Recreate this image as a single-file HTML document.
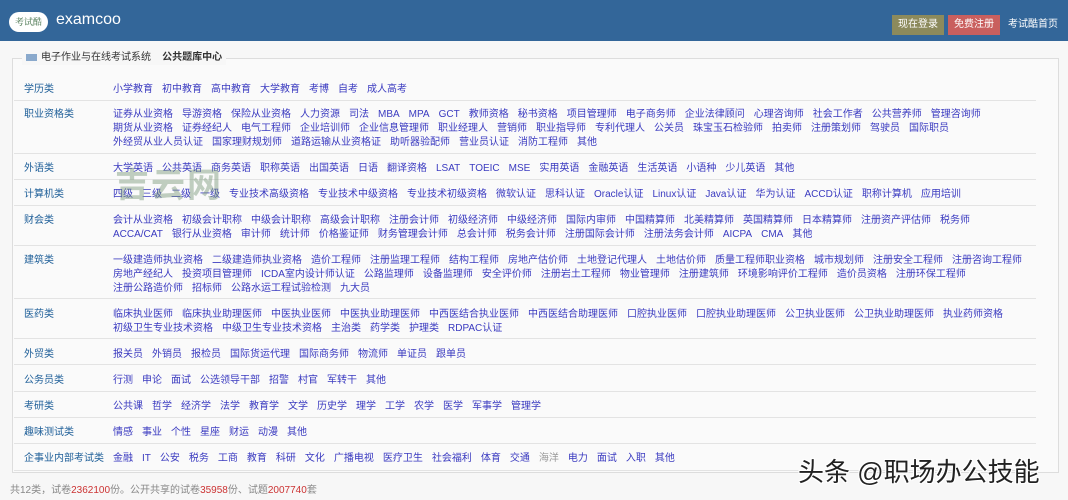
<!DOCTYPE html>
<html><head><meta charset="utf-8"><style>
*{margin:0;padding:0;box-sizing:border-box}
body{width:1068px;height:500px;background:#f7f7f7;font-family:"Liberation Sans","Noto Sans CJK SC",sans-serif;font-size:10px;position:relative;overflow:hidden}
.hdr{position:absolute;left:0;top:0;width:1068px;height:41px;background:#336699}
.logo{position:absolute;left:9px;top:12px;width:39px;height:20px;background:#fff;border-radius:10px;color:#3a6a40;font-size:9px;line-height:20px;text-align:center;font-family:"Noto Serif CJK SC",serif}
.brand{position:absolute;left:56px;top:11px;color:#fff;font-size:16px}
.btn{position:absolute;top:15px;height:20px;line-height:20px;color:#fff;font-size:10px;padding:0 6px}
.fs{position:absolute;left:12px;top:58px;width:1047px;height:415px;border:1px solid #ddd;background:#fafafa}
.lg{position:absolute;left:22px;top:51px;background:#f7f7f7;padding:0 4px;font-size:10px;color:#333;line-height:14px}
.lg i{display:inline-block;width:11px;height:7px;background:#8aa9cc;margin-right:4px;vertical-align:middle}
.row{position:absolute;left:14px;width:1022px;border-bottom:1px solid #e3e3e3}
.lab{position:absolute;left:10px;color:#1d5e98;font-size:10px;line-height:14px;margin-top:2px}
.lk{position:absolute;left:99px;color:#3a3ac0;line-height:14px;white-space:nowrap;margin-top:2px}
.lk span{margin-right:9px}
.g{color:#999}
.ft{position:absolute;left:10px;top:481px;color:#888;font-size:10px}
.ft b{color:#c33;font-weight:normal}
.wm{position:absolute;left:115px;top:158px;font-size:34px;color:rgba(120,150,120,.45);letter-spacing:2px;font-weight:bold}
.tt{position:absolute;left:798px;top:452px;font-size:26px;color:#222;text-shadow:-1px -1px 0 #fff,1px 1px 0 #fff,1px -1px 0 #fff,-1px 1px 0 #fff}
</style></head><body>
<div class="hdr">
<div class="logo">考试酷</div>
<div class="brand">examcoo</div>
<div class="btn" style="left:892px;background:#8c8a5c">现在登录</div>
<div class="btn" style="left:948px;background:#c95f5e">免费注册</div>
<div style="position:absolute;left:1008px;top:15px;line-height:20px;color:#fff">考试酷首页</div>
</div>
<div class="fs"></div>
<div class="lg"><i></i>电子作业与在线考试系统 &nbsp;&nbsp;&nbsp;<b>公共题库中心</b></div>

<div class="row" style="top:80px;height:21px"><div class="lab" style="top:1px">学历类</div><div class="lk" style="top:1px"><span>小学教育</span><span>初中教育</span><span>高中教育</span><span>大学教育</span><span>考博</span><span>自考</span><span>成人高考</span></div></div>
<div class="row" style="top:101px;height:53px"><div class="lab" style="top:5px">职业资格类</div><div class="lk" style="top:5px"><span>证券从业资格</span><span>导游资格</span><span>保险从业资格</span><span>人力资源</span><span>司法</span><span>MBA</span><span>MPA</span><span>GCT</span><span>教师资格</span><span>秘书资格</span><span>项目管理师</span><span>电子商务师</span><span>企业法律顾问</span><span>心理咨询师</span><span>社会工作者</span><span>公共营养师</span><span>管理咨询师</span><br><span>期货从业资格</span><span>证券经纪人</span><span>电气工程师</span><span>企业培训师</span><span>企业信息管理师</span><span>职业经理人</span><span>营销师</span><span>职业指导师</span><span>专利代理人</span><span>公关员</span><span>珠宝玉石检验师</span><span>拍卖师</span><span>注册策划师</span><span>驾驶员</span><span>国际职员</span><br><span>外经贸从业人员认证</span><span>国家理财规划师</span><span>道路运输从业资格证</span><span>助听器验配师</span><span>营业员认证</span><span>消防工程师</span><span>其他</span></div></div>
<div class="row" style="top:154px;height:26px"><div class="lab" style="top:6px">外语类</div><div class="lk" style="top:6px"><span>大学英语</span><span>公共英语</span><span>商务英语</span><span>职称英语</span><span>出国英语</span><span>日语</span><span>翻译资格</span><span>LSAT</span><span>TOEIC</span><span>MSE</span><span>实用英语</span><span>金融英语</span><span>生活英语</span><span>小语种</span><span>少儿英语</span><span>其他</span></div></div>
<div class="row" style="top:180px;height:26px"><div class="lab" style="top:6px">计算机类</div><div class="lk" style="top:6px"><span>四级</span><span>三级</span><span>二级</span><span>一级</span><span>专业技术高级资格</span><span>专业技术中级资格</span><span>专业技术初级资格</span><span>微软认证</span><span>思科认证</span><span>Oracle认证</span><span>Linux认证</span><span>Java认证</span><span>华为认证</span><span>ACCD认证</span><span>职称计算机</span><span>应用培训</span></div></div>
<div class="row" style="top:206px;height:40px"><div class="lab" style="top:6px">财会类</div><div class="lk" style="top:6px"><span>会计从业资格</span><span>初级会计职称</span><span>中级会计职称</span><span>高级会计职称</span><span>注册会计师</span><span>初级经济师</span><span>中级经济师</span><span>国际内审师</span><span>中国精算师</span><span>北美精算师</span><span>英国精算师</span><span>日本精算师</span><span>注册资产评估师</span><span>税务师</span><br><span>ACCA/CAT</span><span>银行从业资格</span><span>审计师</span><span>统计师</span><span>价格鉴证师</span><span>财务管理会计师</span><span>总会计师</span><span>税务会计师</span><span>注册国际会计师</span><span>注册法务会计师</span><span>AICPA</span><span>CMA</span><span>其他</span></div></div>
<div class="row" style="top:246px;height:53px"><div class="lab" style="top:6px">建筑类</div><div class="lk" style="top:6px"><span>一级建造师执业资格</span><span>二级建造师执业资格</span><span>造价工程师</span><span>注册监理工程师</span><span>结构工程师</span><span>房地产估价师</span><span>土地登记代理人</span><span>土地估价师</span><span>质量工程师职业资格</span><span>城市规划师</span><span>注册安全工程师</span><span>注册咨询工程师</span><br><span>房地产经纪人</span><span>投资项目管理师</span><span>ICDA室内设计师认证</span><span>公路监理师</span><span>设备监理师</span><span>安全评价师</span><span>注册岩土工程师</span><span>物业管理师</span><span>注册建筑师</span><span>环境影响评价工程师</span><span>造价员资格</span><span>注册环保工程师</span><br><span>注册公路造价师</span><span>招标师</span><span>公路水运工程试验检测</span><span>九大员</span></div></div>
<div class="row" style="top:299px;height:40px"><div class="lab" style="top:7px">医药类</div><div class="lk" style="top:7px"><span>临床执业医师</span><span>临床执业助理医师</span><span>中医执业医师</span><span>中医执业助理医师</span><span>中西医结合执业医师</span><span>中西医结合助理医师</span><span>口腔执业医师</span><span>口腔执业助理医师</span><span>公卫执业医师</span><span>公卫执业助理医师</span><span>执业药师资格</span><br><span>初级卫生专业技术资格</span><span>中级卫生专业技术资格</span><span>主治类</span><span>药学类</span><span>护理类</span><span>RDPAC认证</span></div></div>
<div class="row" style="top:339px;height:26px"><div class="lab" style="top:7px">外贸类</div><div class="lk" style="top:7px"><span>报关员</span><span>外销员</span><span>报检员</span><span>国际货运代理</span><span>国际商务师</span><span>物流师</span><span>单证员</span><span>跟单员</span></div></div>
<div class="row" style="top:365px;height:27px"><div class="lab" style="top:7px">公务员类</div><div class="lk" style="top:7px"><span>行测</span><span>申论</span><span>面试</span><span>公选领导干部</span><span>招警</span><span>村官</span><span>军转干</span><span>其他</span></div></div>
<div class="row" style="top:392px;height:26px"><div class="lab" style="top:6px">考研类</div><div class="lk" style="top:6px"><span>公共课</span><span>哲学</span><span>经济学</span><span>法学</span><span>教育学</span><span>文学</span><span>历史学</span><span>理学</span><span>工学</span><span>农学</span><span>医学</span><span>军事学</span><span>管理学</span></div></div>
<div class="row" style="top:418px;height:26px"><div class="lab" style="top:6px">趣味测试类</div><div class="lk" style="top:6px"><span>情感</span><span>事业</span><span>个性</span><span>星座</span><span>财运</span><span>动漫</span><span>其他</span></div></div>
<div class="row" style="top:444px;height:27px"><div class="lab" style="top:6px">企事业内部考试类</div><div class="lk" style="top:6px"><span>金融</span><span>IT</span><span>公安</span><span>税务</span><span>工商</span><span>教育</span><span>科研</span><span>文化</span><span>广播电视</span><span>医疗卫生</span><span>社会福利</span><span>体育</span><span>交通</span><span class="g">海洋</span><span>电力</span><span>面试</span><span>入职</span><span>其他</span></div></div>
<div class="wm">吉云网</div>
<div class="ft">共12类，试卷<b>2362100</b>份。公开共享的试卷<b>35958</b>份、试题<b>2007740</b>套</div>
<div class="tt">头条 @职场办公技能</div>
</body></html>
